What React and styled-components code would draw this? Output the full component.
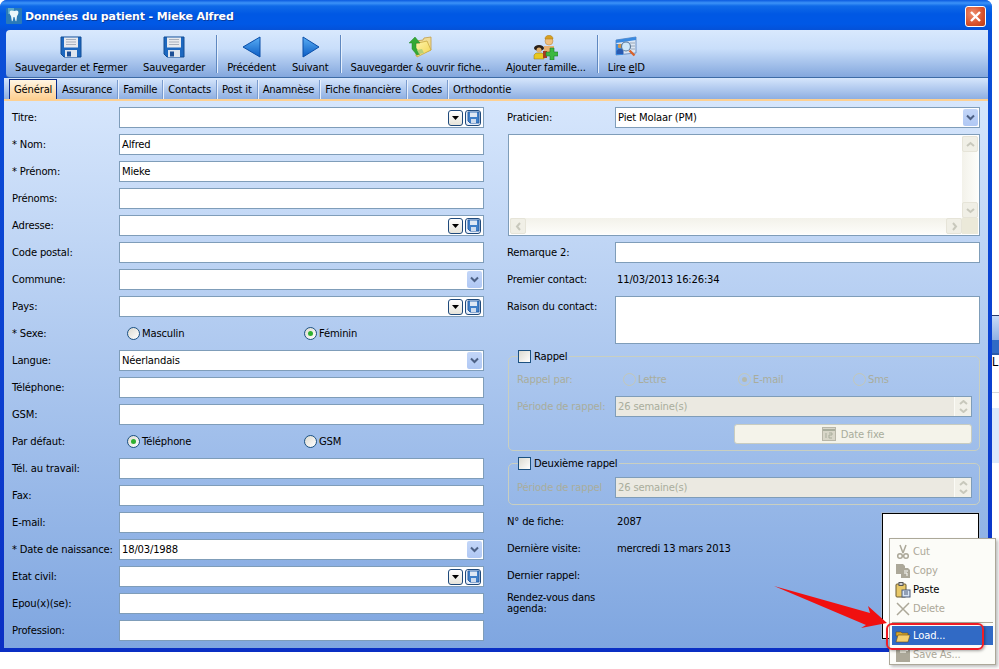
import React from "react";
import styled, { createGlobalStyle } from "styled-components";

const GlobalStyle = createGlobalStyle`
  html, body {
    margin: 0;
    padding: 0;
    background: #fff;
    overflow: hidden;
  }
  * { box-sizing: border-box; }
  body {
    font-family: "DejaVu Sans", Tahoma, sans-serif;
    font-size: 10px;
    letter-spacing: -0.17px;
    color: #000;
  }
`;

const Page = styled.div`
  position: relative;
  display: flex;
  width: 999px;
  height: 669px;
  background: #fff;
  overflow: hidden;
`;

const Window = styled.div`
  width: 992px;
  height: 652px;
  display: flex;
  flex-direction: column;
  padding: 0 4px 4px 4px;
  border-radius: 7px 7px 0 0;
  background: linear-gradient(#0a50d8, #0b3fd0 60%, #0a2fc4);
  flex: none;
`;

const TitleBar = styled.div`
  height: 30px;
  margin: 0 -4px;
  padding: 2px 6px 0 6px;
  display: flex;
  align-items: center;
  gap: 3px;
  border-radius: 7px 7px 0 0;
  background: linear-gradient(#0a5ae0 0, #3c93f8 3px, #0f6ae8 6px, #0058e4 14px, #0058e6 24px, #0451d8 30px);
`;

const TitleText = styled.div`
  flex: 1;
  color: #fff;
  font-weight: bold;
  font-size: 11px;
  letter-spacing: -0.12px;
  text-shadow: 1px 1px 0 #0a3a9a;
`;

const CloseButton = styled.div`
  width: 21px;
  height: 21px;
  border: 1px solid #fff;
  border-radius: 3px;
  background: radial-gradient(circle at 35% 35%, #ee9070, #d8512c 60%, #b83c18);
  display: flex;
  align-items: center;
  justify-content: center;
  margin-right: 0;
`;

const Client = styled.div`
  flex: 1;
  display: flex;
  flex-direction: column;
  min-height: 0;
`;

const Toolbar = styled.div`
  height: 48px;
  margin-left: 2px;
  display: flex;
  align-items: stretch;
  padding: 1px 0 0 1px;
  background: linear-gradient(#d9e9fd 0, #c9defa 40%, #83a7dd 100%);
  border-bottom: 1px solid #3d6ba5;
  border-radius: 4px 0 0 4px;
`;

const ToolButton = styled.div`
  display: flex;
  flex-direction: column;
  align-items: center;
  justify-content: space-between;
  padding: 4px 8px 4px;
  white-space: nowrap;
  height: 46px;
  u { text-underline-offset: 1px; }
`;

const ToolIcon = styled.div`
  height: 24px;
  display: flex;
  align-items: center;
  justify-content: center;
`;

const ToolSep = styled.div`
  width: 1px;
  margin: 4px 2px 2px 3px;
  height: 38px;
  background: #5f88c0;
  box-shadow: 1px 0 0 #e6f0fd;
`;

const TabStrip = styled.div`
  height: 23px;
  display: flex;
  align-items: flex-end;
  padding-left: 5px;
  background: linear-gradient(#d6e6fc, #8eafe2);
  border-bottom: 2px solid #fdd092;
`;

const Tab = styled.div`
  height: ${(p) => (p.$active ? "20px" : "19px")};
  display: flex;
  align-items: center;
  padding: 0 5px;
  white-space: nowrap;
  ${(p) =>
    p.$active
      ? `
    background: linear-gradient(#fff6e4, #fdd092);
    border: 1px solid #0a2a8c;
    border-bottom: none;
    padding: 0 4px;
    width: 48px;
    margin-right: 0;
  `
      : `
    &:not(:last-child) { border-right: 1px solid #7a9ccf; box-shadow: 1px 0 0 #e8f0fc; }
  `}
`;

const Form = styled.div`
  flex: 1;
  display: grid;
  grid-template-columns: 472px 473px;
  column-gap: 23px;
  padding: 6px 0 0 8px;
  background: linear-gradient(#d6e6fc, #7fa6e0);
`;

const Column = styled.div`
  display: flex;
  flex-direction: column;
  gap: 6px;
`;

const Row = styled.div`
  display: grid;
  grid-template-columns: ${(p) => p.$label || 107}px 1fr;
  height: ${(p) => p.$height || 21}px;
  align-items: ${(p) => (p.$top ? "start" : "center")};
`;

const Label = styled.div`
  white-space: nowrap;
  color: ${(p) => (p.$disabled ? "#a9ad9c" : "#000")};
  padding-top: ${(p) => (p.$top ? 5 : 0)}px;
`;

const Field = styled.div`
  position: relative;
  height: ${(p) => p.$height || 21}px;
  padding-left: 2px;
  display: flex;
  align-items: center;
  border: 1px solid #7f9db9;
  background: ${(p) => (p.$disabled ? "#ebe9e1" : "#fff")};
  color: ${(p) => (p.$disabled ? "#a9ad9c" : "#000")};
`;

const FieldText = styled.span`
  flex: 1;
`;

const ComboArrow = styled.div`
  width: 15px;
  height: 17px;
  margin-right: 1px;
  display: flex;
  align-items: center;
  justify-content: center;
  border-radius: 2px;
  background: linear-gradient(#c3d6f8, #b0c8f4);
`;

const MiniButton = styled.div`
  width: ${(p) => (p.$save ? 16 : 15)}px;
  height: 16px;
  margin-right: 2px;
  display: flex;
  align-items: center;
  justify-content: center;
  background: ${(p) => (p.$save ? "#e8eef8" : "linear-gradient(#fff, #e6e4da)")};
  border: 1px solid #1f4a7c;
  border-radius: 3px;
`;

const Choices = styled.div`
  display: grid;
  grid-template-columns: ${(p) => p.$cols};
  padding-left: 8px;
`;

const Choice = styled.div`
  display: flex;
  align-items: center;
  gap: 2px;
  white-space: nowrap;
  color: ${(p) => (p.$disabled ? "#a9ad9c" : "#000")};
`;

const Radio = styled.span`
  position: relative;
  width: 13px;
  height: 13px;
  border-radius: 50%;
  border: 1px solid ${(p) => (p.$disabled ? "#c3c8b8" : "#1c5180")};
  background: ${(p) =>
    p.$disabled ? "transparent" : "linear-gradient(135deg, #dcdad0, #fff)"};
  display: flex;
  align-items: center;
  justify-content: center;
  &::after {
    content: "";
    display: ${(p) => (p.$on ? "block" : "none")};
    width: 5px;
    height: 5px;
    border-radius: 50%;
    background: ${(p) => (p.$disabled ? "#b5b9aa" : "#2fb030")};
  }
`;

const TextArea = styled.div`
  height: 102px;
  margin-left: 1px;
  display: grid;
  grid-template-columns: 1fr 16px;
  grid-template-rows: 1fr 16px;
  border: 1px solid #7f9db9;
  background: #fff;
  padding: 1px;
`;

const Blank = styled.div`
  background: #fff;
`;

const ScrollBar = styled.div`
  display: flex;
  flex-direction: ${(p) => (p.$vertical ? "column" : "row")};
  justify-content: space-between;
  background: ${(p) =>
    p.$vertical
      ? "linear-gradient(90deg, #f3f2ea, #fdfdfa)"
      : "linear-gradient(#f3f2ea, #fdfdfa)"};
`;

const ScrollButton = styled.div`
  width: 16px;
  height: 16px;
  display: flex;
  align-items: center;
  justify-content: center;
  background: #f0efe6;
  border: 1px solid #e6e4d8;
  border-radius: 2px;
`;

const ScrollCorner = styled.div`
  background: #ebe9d9;
`;

const Group = styled.fieldset`
  margin: ${(p) => p.$top}px 0 0 1px;
  padding: ${(p) => p.$pad}px 7px 6px 8px;
  border: 1px solid #c9cfc0;
  border-radius: 5px;
  display: flex;
  flex-direction: column;
  gap: 6px;
  min-width: 0;
`;

const Legend = styled.legend`
  display: flex;
  align-items: center;
  gap: 3px;
  margin-left: 1px;
  padding: 0 2px 0 0;
  height: 16px;
`;

const CheckBox = styled.span`
  width: 13px;
  height: 13px;
  border: 1px solid #1c5180;
  background: linear-gradient(135deg, #dcdad0, #fff);
`;

const SpinBox = styled.div`
  width: 17px;
  height: 100%;
  display: flex;
  flex-direction: column;
  align-items: center;
  justify-content: center;
  gap: 3px;
  background: #f1f0e8;
  border-left: 1px solid #fbfbf6;
`;

const DateButton = styled.div`
  align-self: flex-end;
  width: 238px;
  height: 20px;
  margin-top: 1px;
  display: flex;
  align-items: center;
  justify-content: center;
  gap: 5px;
  color: #a9ad9c;
  background: #f4f3ea;
  border: 1px solid #c8ccc0;
  border-radius: 3px;
`;

const InfoBlock = styled.div`
  display: flex;
  justify-content: space-between;
`;

const InfoRows = styled.div`
  display: flex;
  flex-direction: column;
  gap: 6px;
`;

const Photo = styled.div`
  width: 97px;
  height: 126px;
  margin-right: 1px;
  margin-top: 2px;
  background: #fff;
  border: 1px solid #000;
  outline: 1px solid #a9bcd6;
`;

const Behind = styled.div`
  flex: 1;
  display: flex;
  flex-direction: column;
  padding-top: 315px;
`;

const BehindBand = styled.div`
  height: ${(p) => p.$h}px;
  background: ${(p) => p.$bg};
  font-family: "Liberation Sans", sans-serif;
  font-size: 12px;
  overflow: hidden;
  border-top: ${(p) => p.$line || "none"};
`;

const ContextMenu = styled.div`
  position: absolute;
  left: 889px;
  top: 538px;
  width: 107px;
  height: 127px;
  padding: 3px 2px;
  background: #fcfcf8;
  border: 1px solid #aca899;
  box-shadow: 2px 2px 3px rgba(0, 0, 0, 0.25);
`;

const MenuItem = styled.div`
  height: 19px;
  display: flex;
  align-items: center;
  gap: 2px;
  padding-left: 3px;
  color: ${(p) => (p.$active ? "#fff" : p.$disabled ? "#aca899" : "#000")};
  background: ${(p) => (p.$active ? "#316ac5" : "transparent")};
`;

const MenuIcon = styled.span`
  width: 16px;
  height: 16px;
  display: flex;
`;

const MenuSep = styled.div`
  height: 1px;
  margin: 4px 0 3px 0;
  background: #aca899;
`;

const Highlight = styled.div`
  position: absolute;
  left: 886px;
  top: 623px;
  width: 98px;
  height: 27px;
  border: 2px solid #ef1c24;
  border-radius: 6px;
  box-shadow: 1px 1px 3px rgba(0, 0, 0, 0.35);
`;

const ArrowOverlay = styled.svg`
  position: absolute;
  left: 765px;
  top: 580px;
`;

function Floppy() {
  return (
    <svg width="22" height="22" viewBox="0 0 22 22">
      <path d="M1 1h20v20H4l-3-3z" fill="#1d68c0" stroke="#134c94" strokeWidth="1" />
      <rect x="4" y="1.500" width="14" height="10" fill="#e8eaee" />
      <path d="M6 3.500h10M6 6h10M6 8.500h10" stroke="#a8b0bc" strokeWidth="1" />
      <rect x="5" y="14" width="12" height="7" fill="#dfe5ee" />
      <rect x="7" y="15.500" width="4" height="5" fill="#1d4f96" />
    </svg>
  );
}

function SmallFloppy() {
  return (
    <svg width="13" height="13" viewBox="0 0 13 13">
      <path d="M1 1h11v11H3l-2-2z" fill="#3f7fc8" stroke="#2a62a8" />
      <rect x="3" y="1.500" width="7" height="4.500" fill="#dfe8f4" />
      <rect x="4" y="8" width="5" height="4" fill="#cfdcee" />
    </svg>
  );
}

function TriangleNav({ dir }) {
  const d = dir === "left" ? "M18 1v20L1 11z" : "M2 1v20l16-10z";
  return (
    <svg width="19" height="22" viewBox="0 0 19 22">
      <defs>
        <linearGradient id={`nav${dir}`} x1="0" y1="0" x2="0" y2="1">
          <stop offset="0" stopColor="#5aaef5" />
          <stop offset="1" stopColor="#0b5cc4" />
        </linearGradient>
      </defs>
      <path d={d} fill={`url(#nav${dir})`} stroke="#0a4ea8" strokeLinejoin="round" />
    </svg>
  );
}

function FolderArrow() {
  return (
    <svg width="23" height="23" viewBox="0 0 23 23">
      <defs>
        <linearGradient id="folderFront" x1="0" y1="0" x2="1" y2="1">
          <stop offset="0" stopColor="#fff6b0" />
          <stop offset="1" stopColor="#f2d34e" />
        </linearGradient>
      </defs>
      <path d="M7 5l7-1 1-2 7-1v13l-15 6z" fill="#f0dc94" stroke="#c09c48" strokeWidth="0.8" />
      <path d="M5 8l13-3 4 9-14 7z" fill="url(#folderFront)" stroke="#c8a840" strokeWidth="0.8" />
      <path d="M6 1L0 7h3v6l5 6 3-1-4-6V7h4z" fill="#35a835" stroke="#1f8a2a" strokeWidth="0.5" />
      <path d="M8 14l5-1 2 4-5 1z" fill="#b7cf78" />
    </svg>
  );
}

function Family() {
  return (
    <svg width="25" height="25" viewBox="0 0 25 25">
      <circle cx="16" cy="6" r="4" fill="#f0c080" stroke="#b08038" strokeWidth="0.5" />
      <path d="M12 4c0-5 8-5 8 0z" fill="#d8a020" stroke="#a87818" strokeWidth="0.5" />
      <path d="M11 11h10v8H11z" fill="#e8b070" />
      <ellipse cx="6" cy="13" rx="5" ry="3" fill="#2a2018" />
      <circle cx="6" cy="15" r="2.500" fill="#e0b070" />
      <path d="M1 24v-4l2-2h6l2 2v4z" fill="#e8c820" stroke="#907010" strokeWidth="0.5" />
      <path d="M10 16h4v7h-4z" fill="#a83a20" />
      <path d="M17 13h4v4h4v4h-4v4h-4v-4h-4v-4h4z" fill="#3cb840" stroke="#1f7a2a" strokeWidth="0.6" />
    </svg>
  );
}

function ReadId() {
  return (
    <svg width="22" height="22" viewBox="0 0 22 22">
      <path d="M1 4l20-3v16L1 19z" fill="#dbe6f4" stroke="#6f92c4" />
      <path d="M1 4l20-3v3L1 7z" fill="#3a8ae0" />
      <path d="M1 8h7v11H1z" fill="#3a8ae0" />
      <circle cx="5" cy="10" r="2.200" fill="#d09850" />
      <path d="M1.500 18v-3l2-2h3l2 2v3z" fill="#2a5ab0" />
      <path d="M15 7h5M16 10h4M16 13h4" stroke="#9aa8b8" />
      <circle cx="11" cy="10.500" r="4.500" fill="#cfe8fa" stroke="#5a7898" strokeWidth="1.200" />
      <path d="M14.500 14.500l5 5" stroke="#d8622c" strokeWidth="2.400" />
    </svg>
  );
}

function Tooth() {
  return (
    <svg width="16" height="16" viewBox="0 0 16 16">
      <rect width="16" height="16" rx="1" fill="#2a7ab8" />
      <path d="M2 0h6v6H2z" fill="#5aa8c8" />
      <path d="M4 3c1.500-1 2.500-.5 4 0 1.500-.5 3-1 4 0 1 1.500 0 4-1 5l-.6 5c-.4.6-.9.2-1-.5L8.500 9H7.500l-.7 3.500c-.2.7-.7 1-1 .5L5 8C4 7 3 4.500 4 3z" fill="#eaf6fc" />
    </svg>
  );
}

const DownChevron = ({ color = "#4d6185" }) => (
  <svg width="9" height="7" viewBox="0 0 9 7">
    <path d="M1 1.500l3.500 3.500L8 1.500" fill="none" stroke={color} strokeWidth="2" />
  </svg>
);

const Chev = ({ d, c = "#c8c8bc", w = 9, h = 9 }) => (
  <svg width={w} height={h} viewBox="0 0 9 9">
    <path d={d} fill="none" stroke={c} strokeWidth="2" />
  </svg>
);

function Combo({ value }) {
  return (
    <Field>
      <FieldText>{value}</FieldText>
      <ComboArrow>
        <DownChevron />
      </ComboArrow>
    </Field>
  );
}

function EditCombo() {
  return (
    <Field>
      <FieldText />
      <MiniButton>
        <svg width="7" height="4" viewBox="0 0 7 4">
          <path d="M0 0h7L3.500 4z" fill="#000" />
        </svg>
      </MiniButton>
      <MiniButton $save>
        <SmallFloppy />
      </MiniButton>
    </Field>
  );
}

function Spin({ value }) {
  return (
    <Field $disabled $height={21}>
      <FieldText>{value}</FieldText>
      <SpinBox>
        <svg width="9" height="5" viewBox="0 0 9 5">
          <path d="M1 4l3.500-3L8 4" fill="none" stroke="#c8c8bc" strokeWidth="2" />
        </svg>
        <svg width="9" height="5" viewBox="0 0 9 5">
          <path d="M1 1l3.500 3L8 1" fill="none" stroke="#c8c8bc" strokeWidth="2" />
        </svg>
      </SpinBox>
    </Field>
  );
}

const leftRows = [
  ["Titre:", "edit"],
  ["* Nom:", "text", "Alfred"],
  ["* Prénom:", "text", "Mieke"],
  ["Prénoms:", "text"],
  ["Adresse:", "edit"],
  ["Code postal:", "text"],
  ["Commune:", "combo"],
  ["Pays:", "edit"],
  ["* Sexe:", "radio", ["Masculin", "Féminin"], 1],
  ["Langue:", "combo", "Néerlandais"],
  ["Téléphone:", "text"],
  ["GSM:", "text"],
  ["Par défaut:", "radio", ["Téléphone", "GSM"], 0],
  ["Tél. au travail:", "text"],
  ["Fax:", "text"],
  ["E-mail:", "text"],
  ["* Date de naissance:", "combo", "18/03/1988"],
  ["Etat civil:", "edit"],
  ["Epou(x)(se):", "text"],
  ["Profession:", "text"],
];

const tabs = [
  "Général",
  "Assurance",
  "Famille",
  "Contacts",
  "Post it",
  "Anamnèse",
  "Fiche financière",
  "Codes",
  "Orthodontie",
];

function renderField(kind, value, selected) {
  if (kind === "edit") return <EditCombo />;
  if (kind === "combo") return <Combo value={value} />;
  if (kind === "radio") {
    return (
      <Choices $cols="177px 1fr">
        {value.map((v, i) => (
          <Choice key={v}>
            <Radio $on={i === selected} />
            {v}
          </Choice>
        ))}
      </Choices>
    );
  }
  return (
    <Field>
      <FieldText>{value}</FieldText>
    </Field>
  );
}

export default function App() {
  return (
    <Page>
      <GlobalStyle />
      <Window>
        <TitleBar>
          <Tooth />
          <TitleText>Données du patient - Mieke Alfred</TitleText>
          <CloseButton>
            <svg width="11" height="11" viewBox="0 0 11 11">
              <path d="M1 1l9 9M10 1l-9 9" stroke="#fff" strokeWidth="2.400" />
            </svg>
          </CloseButton>
        </TitleBar>
        <Client>
          <Toolbar>
            <ToolButton>
              <ToolIcon><Floppy /></ToolIcon>
              <span>Sauvegarder et F<u>e</u>rmer</span>
            </ToolButton>
            <ToolButton>
              <ToolIcon><Floppy /></ToolIcon>
              <span>Sauvegarder</span>
            </ToolButton>
            <ToolSep />
            <ToolButton>
              <ToolIcon><TriangleNav dir="left" /></ToolIcon>
              <span>Précédent</span>
            </ToolButton>
            <ToolButton>
              <ToolIcon><TriangleNav dir="right" /></ToolIcon>
              <span>Suivant</span>
            </ToolButton>
            <ToolSep />
            <ToolButton>
              <ToolIcon><FolderArrow /></ToolIcon>
              <span>Sauvegarder &amp; ouvrir fiche...</span>
            </ToolButton>
            <ToolButton>
              <ToolIcon><Family /></ToolIcon>
              <span>Ajouter famille...</span>
            </ToolButton>
            <ToolSep />
            <ToolButton>
              <ToolIcon><ReadId /></ToolIcon>
              <span>Lire <u>e</u>ID</span>
            </ToolButton>
          </Toolbar>
          <TabStrip>
            {tabs.map((t, i) => (
              <Tab key={t} $active={i === 0}>{t}</Tab>
            ))}
          </TabStrip>
          <Form>
            <Column>
              {leftRows.map(([label, kind, value, selected]) => (
                <Row key={label}>
                  <Label>{label}</Label>
                  {renderField(kind, value, selected)}
                </Row>
              ))}
            </Column>
            <Column>
              <Row $label={108}>
                <Label>Praticien:</Label>
                <Combo value="Piet Molaar (PM)" />
              </Row>
              <TextArea>
                <Blank />
                <ScrollBar $vertical>
                  <ScrollButton><Chev d="M1 6l3.500-3L8 6" /></ScrollButton>
                  <ScrollButton><Chev d="M1 3l3.500 3L8 3" /></ScrollButton>
                </ScrollBar>
                <ScrollBar>
                  <ScrollButton><Chev d="M6 1L3 4.500 6 8" /></ScrollButton>
                  <ScrollButton><Chev d="M3 1l3 3.500L3 8" /></ScrollButton>
                </ScrollBar>
                <ScrollCorner />
              </TextArea>
              <Row $label={108}>
                <Label>Remarque 2:</Label>
                <Field />
              </Row>
              <Row $label={110}>
                <Label>Premier contact:</Label>
                <span>11/03/2013 16:26:34</span>
              </Row>
              <Row $label={108} $height={48} $top>
                <Label $top>Raison du contact:</Label>
                <Field $height={48} />
              </Row>
              <Group $top={-2} $pad={5}>
                <Legend><CheckBox />Rappel</Legend>
                <Row $label={98}>
                  <Label $disabled>Rappel par:</Label>
                  <Choices $cols="115px 115px 1fr">
                    <Choice $disabled><Radio $disabled />Lettre</Choice>
                    <Choice $disabled><Radio $disabled $on />E-mail</Choice>
                    <Choice $disabled><Radio $disabled />Sms</Choice>
                  </Choices>
                </Row>
                <Row $label={98}>
                  <Label $disabled>Période de rappel:</Label>
                  <Spin value="26 semaine(s)" />
                </Row>
                <DateButton>
                  <svg width="14" height="14" viewBox="0 0 14 14">
                    <rect x="0.500" y="0.500" width="13" height="13" fill="#d8d6c8" stroke="#b8b6a8" />
                    <path d="M1 3h12" stroke="#a9ad9c" strokeWidth="2" />
                    <path d="M4 6v5M7 6h3v2H7v3h3" fill="none" stroke="#a9ad9c" />
                  </svg>
                  Date fixe
                </DateButton>
              </Group>
              <Group $top={-2} $pad={6}>
                <Legend><CheckBox />Deuxième rappel</Legend>
                <Row $label={98}>
                  <Label $disabled>Période de rappel</Label>
                  <Spin value="26 semaine(s)" />
                </Row>
              </Group>
              <InfoBlock>
                <InfoRows>
                  <Row $label={110}>
                    <Label>N° de fiche:</Label>
                    <span>2087</span>
                  </Row>
                  <Row $label={110}>
                    <Label>Dernière visite:</Label>
                    <span>mercredi 13 mars 2013</span>
                  </Row>
                  <Row $label={110}>
                    <Label>Dernier rappel:</Label>
                    <span />
                  </Row>
                  <Label>Rendez-vous dans<br />agenda:</Label>
                </InfoRows>
                <Photo />
              </InfoBlock>
            </Column>
          </Form>
        </Client>
      </Window>
      <Behind>
        <BehindBand $h={25} $line="1px solid #2a3a6a" $bg="linear-gradient(#c8dbf7, #8fb0e4)" />
        <BehindBand $h={13} $bg="#316ac5" />
        <BehindBand $h={18} $line="2px solid #2a5aa8" $bg="#fff">L</BehindBand>
        <BehindBand $h={21} $bg="#fff" />
        <BehindBand $h={16} $line="1px solid #d8d8d8" $bg="#fff" />
        <BehindBand $h={55} $bg="#dce9fb" />
      </Behind>

      <ArrowOverlay width="130" height="60" viewBox="765 580 130 60">
        <path d="M774 586L870 613L868 606L887 623L861 628L866 625z" fill="#f01010" />
      </ArrowOverlay>
      <ContextMenu>
        <MenuItem $disabled>
          <MenuIcon>
            <svg width="16" height="16" viewBox="0 0 16 16">
              <path d="M5 1l3 8M11 1L8 9" stroke="#aca899" strokeWidth="1.500" />
              <circle cx="5" cy="12" r="2.300" fill="none" stroke="#aca899" strokeWidth="1.500" />
              <circle cx="11" cy="12" r="2.300" fill="none" stroke="#aca899" strokeWidth="1.500" />
            </svg>
          </MenuIcon>
          Cut
        </MenuItem>
        <MenuItem $disabled>
          <MenuIcon>
            <svg width="16" height="16" viewBox="0 0 16 16">
              <path d="M1 1h7l2 2v2H6v6H1z" fill="#aca899" />
              <path d="M6 5h7l2 2v8H6z" fill="#aca899" />
              <path d="M9 8h4M9 10h3v3" fill="none" stroke="#fcfcf8" />
            </svg>
          </MenuIcon>
          Copy
        </MenuItem>
        <MenuItem>
          <MenuIcon>
            <svg width="16" height="16" viewBox="0 0 16 16">
              <rect x="1" y="2" width="10" height="13" rx="1" fill="#e8c868" stroke="#6a5a30" />
              <rect x="4" y="0.500" width="4" height="3" fill="#d0d0d0" stroke="#555" />
              <rect x="7" y="8" width="8" height="7" fill="#d8e4f4" stroke="#4a5a78" />
              <path d="M9 10h4M9 12h4" stroke="#4a5a78" />
            </svg>
          </MenuIcon>
          Paste
        </MenuItem>
        <MenuItem $disabled>
          <MenuIcon>
            <svg width="16" height="16" viewBox="0 0 16 16">
              <path d="M2 2l12 12M14 2L2 14" stroke="#aca899" strokeWidth="1.500" />
            </svg>
          </MenuIcon>
          Delete
        </MenuItem>
        <MenuSep />
        <MenuItem $active>
          <MenuIcon>
            <svg width="16" height="16" viewBox="0 0 16 16">
              <path d="M1 4h5l1 1h6v3H1z" fill="#d8a830" stroke="#6a4a10" strokeWidth="0.600" />
              <path d="M1 14l2-7h12l-2 7z" fill="#f4d070" stroke="#6a4a10" strokeWidth="0.600" />
            </svg>
          </MenuIcon>
          Load...
        </MenuItem>
        <MenuItem $disabled>
          <MenuIcon>
            <svg width="16" height="16" viewBox="0 0 16 16">
              <path d="M1 1h14v14H1z" fill="#aca899" />
              <path d="M5 2h6v4H5z" fill="#dedcd0" />
              <path d="M10 4l3-2v2z" fill="#fcfcf8" />
            </svg>
          </MenuIcon>
          Save As...
        </MenuItem>
      </ContextMenu>
      <Highlight />
    </Page>
  );
}
